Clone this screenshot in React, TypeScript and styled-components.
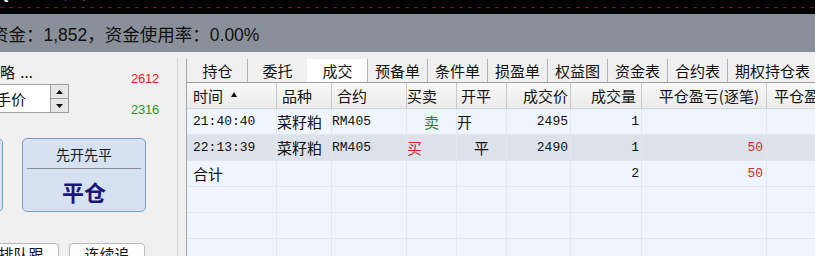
import React from "react";
import styled, { createGlobalStyle } from "styled-components";

type Align = "left" | "right" | "center";

const CJK = `"Noto Sans CJK SC", "Liberation Sans", sans-serif`;
const LATIN = `"Liberation Sans", "Noto Sans CJK SC", sans-serif`;
const MONO = `"Liberation Mono", "Noto Sans CJK SC", monospace`;

const COLS = [90, 55, 75, 50, 50, 64, 71, 125, 120];
const gridCols = COLS.map((w) => `${w}px`).join(" ");

const justify = (a?: Align) =>
	a === "right" ? "flex-end" : a === "center" ? "center" : "flex-start";

const GlobalStyle = createGlobalStyle`
	html, body {
		margin: 0;
		padding: 0;
		background: #f0f0f0;
	}
	body {
		width: 815px;
		height: 256px;
		overflow: hidden;
		font-family: ${CJK};
		color: #111;
	}
	* {
		box-sizing: border-box;
	}
`;

const Page = styled.div`
	display: flex;
	flex-direction: column;
	width: 815px;
	height: 256px;
	overflow: hidden;
`;

const TitleBar = styled.div`
	flex: none;
	height: 14px;
	overflow: hidden;
	background-color: #030303;
	background-image: repeating-linear-gradient(90deg, #6a1c1c 0 4px, transparent 4px 9px);
	background-size: 100% 1px;
	background-position: 0 7px;
	background-repeat: no-repeat;
`;

const TitleText = styled.div`
	margin-top: -11px;
	color: #fff;
	font: bold 12px/12px ${LATIN};
	white-space: nowrap;
`;

const InfoBar = styled.div`
	flex: none;
	height: 38px;
	display: flex;
	align-items: center;
	background: #8a9099;
	overflow: hidden;
`;

const InfoText = styled.div`
	margin-left: -9px;
	font-family: ${LATIN};
	font-size: 17.5px;
	color: #111;
	white-space: nowrap;
`;

const Main = styled.div`
	flex: 1;
	min-height: 0;
	display: flex;
	align-items: flex-start;
`;

/* ---------- left order panel ---------- */

const LeftPanel = styled.div`
	flex: none;
	width: 178px;
	height: 100%;
	margin-top: 6px;
	border-right: 1px solid #d8d8d8;
	display: flex;
	flex-direction: column;
	overflow: hidden;
`;

const TopSection = styled.div`
	display: grid;
	grid-template-columns: 131px 1fr;
`;

const LeftCol = styled.div`
	display: flex;
	flex-direction: column;
	padding-top: 4px;
`;

const Label = styled.div`
	margin-left: -15px;
	font-size: 15px;
	line-height: 20px;
	white-space: nowrap;
	word-spacing: 2px;
`;

const InputRow = styled.div`
	display: flex;
	height: 29px;
	margin-top: 2px;
`;

const InputBox = styled.div`
	width: 75px;
	margin-left: -25px;
	padding-left: 5px;
	display: flex;
	align-items: center;
	background: #fff;
	border: 1px solid #a3a3a3;
	border-right: none;
	font-size: 15px;
	white-space: nowrap;
`;

const Spinner = styled.div`
	width: 19px;
	display: flex;
	flex-direction: column;
`;

const SpinBtn = styled.div`
	flex: 1;
	display: flex;
	align-items: center;
	justify-content: center;
	background: #e7e7e7;
	border: 1px solid #9c9c9c;
	& + & {
		border-top: none;
	}
`;

const PriceCol = styled.div`
	display: flex;
	flex-direction: column;
	gap: 15px;
	padding-top: 13px;
`;

const Price = styled.div<{ $color: string }>`
	font-family: ${LATIN};
	font-size: 13px;
	line-height: 16px;
	letter-spacing: -0.2px;
	color: ${(p) => p.$color};
`;

const CardRow = styled.div`
	display: flex;
	margin-top: 20px;
`;

const ModeCard = styled.div<{ $offset: number }>`
	flex: none;
	width: ${(p) => (p.$offset < 0 ? 74 : 124)}px;
	height: 74px;
	margin-left: ${(p) => p.$offset}px;
	display: flex;
	flex-direction: column;
	align-items: center;
	background: #d6e2f1;
	border: 1px solid #7f9ec7;
	border-radius: 5px;
`;

const ModeLabel = styled.div`
	margin-top: 5px;
	font-size: 14px;
	line-height: 20px;
	color: #1a1a1a;
`;

const Divider = styled.div`
	align-self: stretch;
	height: 1px;
	margin: 4px 4px 0;
	background: #8f8f8f;
`;

const ModeValue = styled.div`
	margin-top: 9px;
	font-size: 22px;
	line-height: 26px;
	font-weight: bold;
	color: #17177f;
`;

const BtnRow = styled.div`
	display: flex;
	gap: 10px;
	margin-top: 31px;
	margin-left: -17px;
`;

const SmallBtn = styled.div`
	flex: none;
	width: 76px;
	height: 30px;
	display: flex;
	justify-content: center;
	background: #fdfdfd;
	border: 1px solid #bababa;
	border-radius: 4px;
	font-size: 15px;
	line-height: 20px;
`;

/* ---------- right trade table ---------- */

const RightPanel = styled.div`
	flex: 1;
	min-width: 0;
	height: 100%;
	margin-left: 8px;
	margin-top: 7px;
	border-left: 1px solid #a6a6a6;
	display: flex;
	flex-direction: column;
	overflow: hidden;
`;

const TabBar = styled.div`
	flex: none;
	display: flex;
	height: 23px;
	background: #f0f0f0;
`;

const Tab = styled.div<{ $active?: boolean; $first?: boolean; $w: number }>`
	flex: none;
	width: ${(p) => p.$w}px;
	display: flex;
	align-items: center;
	justify-content: center;
	font-size: 15px;
	white-space: nowrap;
	background: ${(p) => (p.$active ? "#fff" : "transparent")};
	border-left: 1px solid ${(p) => (p.$first || p.$active ? "transparent" : "#b3b3b3")};
`;

const HeadRow = styled.div`
	flex: none;
	display: grid;
	grid-template-columns: ${gridCols};
	height: 27px;
	border-top: 1px solid #a2a2a2;
	border-bottom: 1px solid #d4d4d4;
	background: linear-gradient(#f9f9f9, #ebebeb);
`;

const HeadCell = styled.div<{ $align?: Align; $pad: number }>`
	display: flex;
	align-items: center;
	justify-content: ${(p) => justify(p.$align)};
	padding: ${(p) => (p.$align === "right" ? `0 ${p.$pad}px 0 0` : `0 0 0 ${p.$pad}px`)};
	border-right: 1px solid #c9c9c9;
	font-size: 15px;
	white-space: nowrap;
	overflow: hidden;
`;

const SortMark = styled.svg`
	margin-left: 8px;
	margin-top: -3px;
`;

const Body = styled.div`
	flex: 1;
	background: #eef5fc;
`;

const BodyRow = styled.div<{ $shade?: boolean }>`
	display: grid;
	grid-template-columns: ${gridCols};
	height: 26px;
	background: ${(p) => (p.$shade ? "#dce2e9" : "#eef5fc")};
	border-bottom: 1px solid #e1e7ee;
`;

const BodyCell = styled.div<{ $align?: Align; $pad?: number; $mono?: boolean; $color?: string }>`
	display: flex;
	align-items: center;
	justify-content: ${(p) => justify(p.$align)};
	padding: ${(p) =>
		p.$align === "right" ? `0 ${p.$pad ?? 0}px 0 0` : `0 0 0 ${p.$pad ?? 0}px`};
	border-right: 1px solid #e2e8ef;
	font-family: ${(p) => (p.$mono ? MONO : CJK)};
	font-size: ${(p) => (p.$mono ? 13 : 15)}px;
	color: ${(p) => p.$color ?? "#111"};
	white-space: nowrap;
	overflow: hidden;
`;

const tabs = ["持仓", "委托", "成交", "预备单", "条件单", "损盈单", "权益图", "资金表", "合约表", "期权持仓表"];

const headers: { text: string; align?: Align; pad: number }[] = [
	{ text: "时间", pad: 6 },
	{ text: "品种", pad: 5 },
	{ text: "合约", pad: 5 },
	{ text: "买卖", pad: 0 },
	{ text: "开平", pad: 4 },
	{ text: "成交价", align: "right", pad: 2 },
	{ text: "成交量", align: "right", pad: 5 },
	{ text: "平仓盈亏(逐笔)", align: "right", pad: 7 },
	{ text: "平仓盈亏(逐日)", pad: 7 },
];

type Cell = { text?: string; align?: Align; pad?: number; mono?: boolean; color?: string };

const RED = "#d42a2a";
const GREEN = "#27882a";

const rows: { shade?: boolean; cells: Cell[] }[] = [
	{
		cells: [
			{ text: "21:40:40", mono: true, pad: 6 },
			{ text: "菜籽粕" },
			{ text: "RM405", mono: true },
			{ text: "卖", align: "center", color: GREEN },
			{ text: "开" },
			{ text: "2495", mono: true, align: "right", pad: 2 },
			{ text: "1", mono: true, align: "right", pad: 2 },
			{},
			{},
		],
	},
	{
		shade: true,
		cells: [
			{ text: "22:13:39", mono: true, pad: 6 },
			{ text: "菜籽粕" },
			{ text: "RM405", mono: true },
			{ text: "买", color: RED },
			{ text: "平", align: "center" },
			{ text: "2490", mono: true, align: "right", pad: 2 },
			{ text: "1", mono: true, align: "right", pad: 2 },
			{ text: "50", mono: true, align: "right", pad: 3, color: RED },
			{},
		],
	},
	{
		cells: [
			{ text: "合计", pad: 6 },
			{},
			{},
			{},
			{},
			{},
			{ text: "2", mono: true, align: "right", pad: 2 },
			{ text: "50", mono: true, align: "right", pad: 3, color: RED },
			{},
		],
	},
	{ cells: Array(9).fill({}) },
	{ cells: Array(9).fill({}) },
	{ cells: Array(9).fill({}) },
];

function Triangle({ up }: { up?: boolean }) {
	return (
		<svg width="7" height="4" viewBox="0 0 7 4">
			<polygon points={up ? "3.5,0 7,4 0,4" : "0,0 7,0 3.5,4"} fill="#111" />
		</svg>
	);
}

function OrderPanel() {
	return (
		<LeftPanel>
			<TopSection>
				<LeftCol>
					<Label>策略 ...</Label>
					<InputRow>
						<InputBox>对手价</InputBox>
						<Spinner>
							<SpinBtn><Triangle up /></SpinBtn>
							<SpinBtn><Triangle /></SpinBtn>
						</Spinner>
					</InputRow>
				</LeftCol>
				<PriceCol>
					<Price $color="#e02222">2612</Price>
					<Price $color="#1e9a1e">2316</Price>
				</PriceCol>
			</TopSection>
			<CardRow>
				<ModeCard $offset={-71} />
				<ModeCard $offset={19}>
					<ModeLabel>先开先平</ModeLabel>
					<Divider />
					<ModeValue>平仓</ModeValue>
				</ModeCard>
			</CardRow>
			<BtnRow>
				<SmallBtn>排队跟</SmallBtn>
				<SmallBtn>连续追</SmallBtn>
			</BtnRow>
		</LeftPanel>
	);
}

function TradeTable() {
	return (
		<RightPanel>
			<TabBar>
				{tabs.map((t, i) => (
					<Tab key={t} $first={i === 0} $active={t === "成交"} $w={t.length > 3 ? 90 : 60}>
						{t}
					</Tab>
				))}
			</TabBar>
			<HeadRow>
				{headers.map((h, i) => (
					<HeadCell key={i} $align={h.align} $pad={h.pad}>
						{h.text}
						{i === 0 && (
							<SortMark width="6" height="5" viewBox="0 0 6 5">
								<polygon points="3,0 6,5 0,5" fill="#111" />
							</SortMark>
						)}
					</HeadCell>
				))}
			</HeadRow>
			<Body>
				{rows.map((r, ri) => (
					<BodyRow key={ri} $shade={r.shade}>
						{r.cells.map((c, ci) => (
							<BodyCell key={ci} $align={c.align} $pad={c.pad} $mono={c.mono} $color={c.color}>
								{c.text}
							</BodyCell>
						))}
					</BodyRow>
				))}
			</Body>
		</RightPanel>
	);
}

export default function App() {
	return (
		<Page>
			<GlobalStyle />
			<TitleBar>
				<TitleText>Q7 交易终端 - 菜籽粕</TitleText>
			</TitleBar>
			<InfoBar>
				<InfoText>资金：1,852，资金使用率：0.00%</InfoText>
			</InfoBar>
			<Main>
				<OrderPanel />
				<TradeTable />
			</Main>
		</Page>
	);
}
